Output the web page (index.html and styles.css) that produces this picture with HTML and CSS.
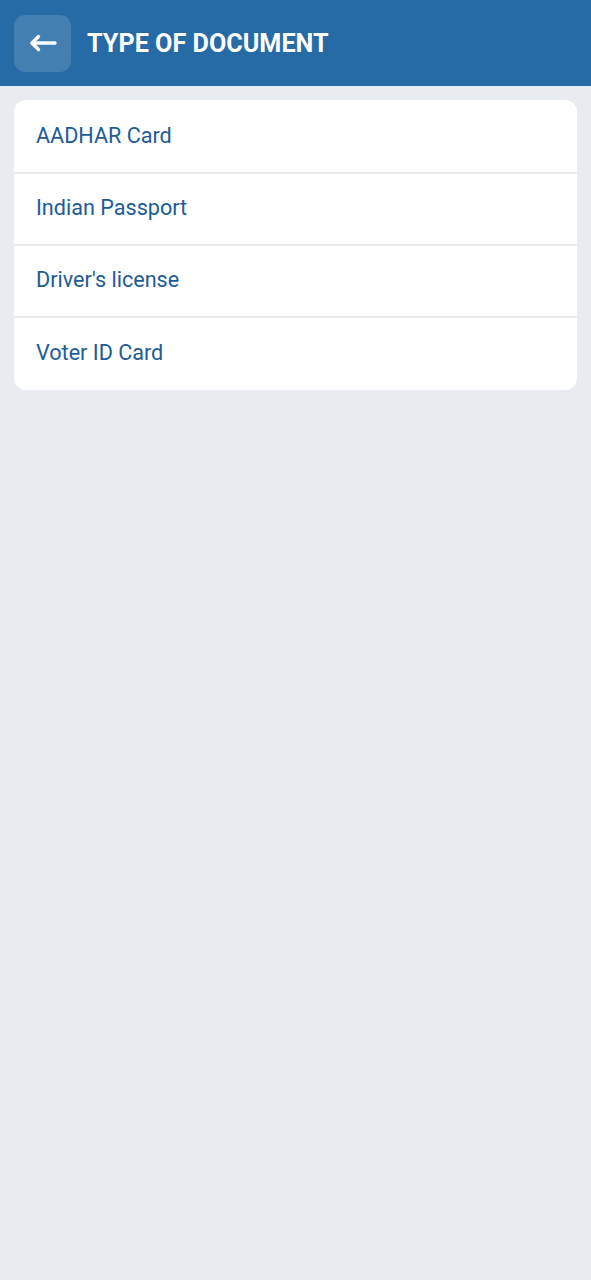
FILE: index.html
```html
<!DOCTYPE html>
<html lang="en">
<head>
<meta charset="utf-8">
<title>Type of Document</title>
<link rel="stylesheet" href="styles.css">
</head>
<body>
<header class="topbar">
  <button class="back" aria-label="Back">
    <svg width="28" height="28" viewBox="0 0 28 28" fill="none" stroke="#fff" stroke-width="3.4" stroke-linecap="round" stroke-linejoin="round">
      <path d="M26 14H3"/>
      <path d="M9.5 7.5L3 14L9.5 20.5"/>
    </svg>
  </button>
  <h1 class="title">TYPE OF DOCUMENT</h1>
</header>
<main class="content">
  <ul class="list">
    <li class="item">AADHAR Card</li>
    <li class="item">Indian Passport</li>
    <li class="item">Driver's license</li>
    <li class="item">Voter ID Card</li>
  </ul>
</main>
</body>
</html>
```

FILE: styles.css
```css
html, body {
  margin: 0;
  padding: 0;
}
body {
  background: #e8ebf0;
  font-family: Roboto, "Noto Sans", "Liberation Sans", sans-serif;
  min-height: 1280px;
}
.topbar {
  height: 86px;
  background: #266aa6;
  display: flex;
  align-items: center;
  padding: 0 14px;
  box-sizing: border-box;
  gap: 16px;
}
.back {
  width: 57px;
  height: 57px;
  border: none;
  border-radius: 11px;
  background: rgba(255, 255, 255, 0.14);
  display: flex;
  align-items: center;
  justify-content: center;
  padding: 0;
  margin: 0;
}
.title {
  margin: 0;
  color: #fff;
  font-size: 25.2px;
  font-weight: 700;
}
.content {
  padding: 14px 14px;
}
.list {
  list-style: none;
  margin: 0;
  padding: 2px 0 0;
  background: #fff;
  border-radius: 12px;
  overflow: hidden;
}
.item {
  height: 72px;
  box-sizing: border-box;
  display: flex;
  align-items: center;
  padding: 0 22px 3px;
  color: #1d5c96;
  font-size: 21.6px;
  border-bottom: 2px solid #e9edf0;
}
.item:last-child {
  border-bottom: none;
  height: 72px;
}
```
